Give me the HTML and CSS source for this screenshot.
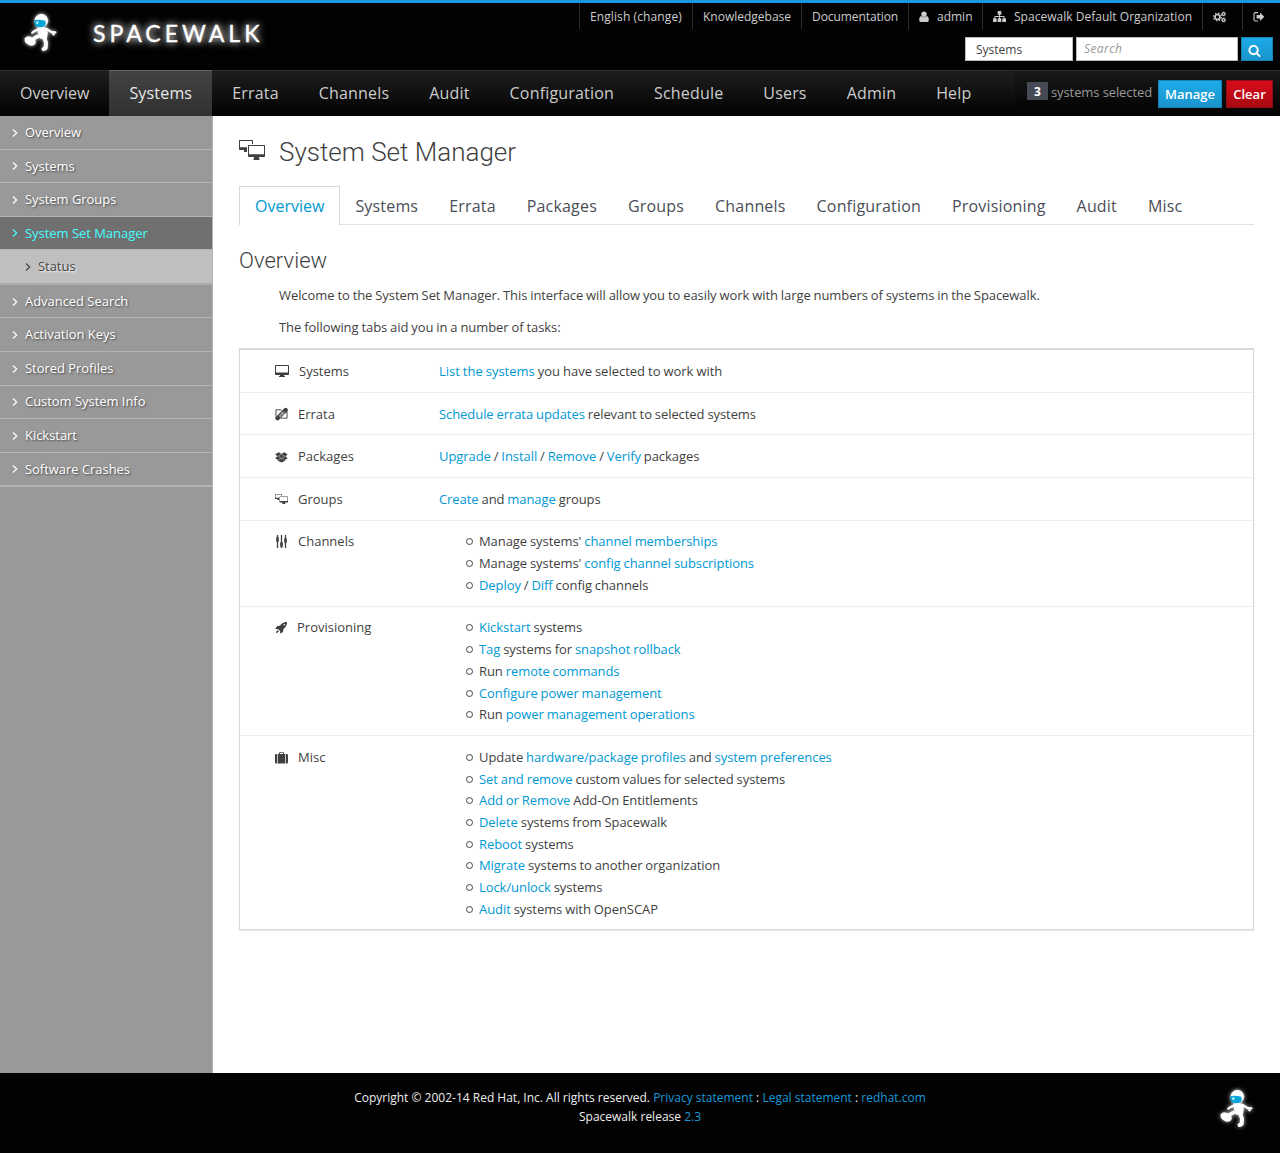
FILE: index.html
```html
<!DOCTYPE html>
<html lang="en">
<head>
<meta charset="utf-8">
<title>Spacewalk - System Set Manager</title>
<link rel="stylesheet" href="styles.css">
</head>
<body>
<svg class="defs" aria-hidden="true">
  <symbol id="astronaut" viewBox="0 0 120 135">
    <g fill="#fff" stroke="#fff" stroke-linecap="round" stroke-linejoin="round">
      <circle cx="64" cy="32" r="20"/>
      <path d="M54 54Q64 52 79 55Q84 70 79 84L62 84Q54 70 54 54Z" stroke-width="4"/>
      <path d="M55 58L42 64L37 68M80 57L94 66L106 67M97 68L101 73" fill="none" stroke-width="7"/>
      <path d="M62 78L52 80L44 84" fill="none" stroke-width="11"/>
      <path d="M15 85Q19 78 28 80Q37 79 45 90Q50 101 41 105Q31 109 24 103Q12 98 15 85Z"/>
      <path d="M72 82L78 98L77 114L71 117" fill="none" stroke-width="12"/>
    </g>
    <path d="M44 30Q60 27 76 32Q79 41 75 48Q62 55 47 49Q41 40 44 30Z" fill="#08a5d8"/>
    <ellipse cx="52" cy="38" rx="4" ry="4" fill="#b4e9fa"/>
  </symbol>
  <symbol id="chevron" viewBox="0 0 6 10"><path d="M1 1.5L4.7 5L1 8.5" fill="none" stroke="currentColor" stroke-width="1.2"/></symbol>
  <symbol id="user" viewBox="0 0 10 12"><circle cx="5" cy="3.2" r="2.7"/><path d="M2.3 5Q5 7.6 7.7 5Q10 5.6 9.8 9.4Q9.6 11 8 11H2Q.4 11 .2 9.4Q0 5.6 2.3 5Z"/></symbol>
  <symbol id="sitemap" viewBox="0 0 1792 1792"><path d="M1792 1248v320q0 40-28 68t-68 28h-320q-40 0-68-28t-28-68v-320q0-40 28-68t68-28h96v-192h-512v192h96q40 0 68 28t28 68v320q0 40-28 68t-68 28h-320q-40 0-68-28t-28-68v-320q0-40 28-68t68-28h96v-192h-512v192h96q40 0 68 28t28 68v320q0 40-28 68t-68 28h-320q-40 0-68-28t-28-68v-320q0-40 28-68t68-28h96v-192q0-52 38-90t90-38h512v-192h-96q-40 0-68-28t-28-68v-320q0-40 28-68t68-28h320q40 0 68 28t28 68v320q0 40-28 68t-68 28h-96v192h512q52 0 90 38t38 90v192h96q40 0 68 28t28 68z"/></symbol>
  <symbol id="cogs" viewBox="0 0 13 12"><g fill="none" stroke="currentColor"><circle cx="4.5" cy="6" r="2.5" stroke-width="1.7"/><circle cx="4.5" cy="6" r="3.9" stroke-width="1.1" stroke-dasharray="1.6 1.46"/><circle cx="10.6" cy="3" r="1.4" stroke-width="1.2"/><circle cx="10.6" cy="3" r="2.1" stroke-width=".7" stroke-dasharray="1 .65"/><circle cx="10.6" cy="9" r="1.4" stroke-width="1.2"/><circle cx="10.6" cy="9" r="2.1" stroke-width=".7" stroke-dasharray="1 .65"/></g></symbol>
  <symbol id="signout" viewBox="0 0 12 12"><path d="M5 1.6H2.5Q1 1.6 1 3V8.6Q1 10 2.5 10H5" fill="none" stroke="currentColor" stroke-width="1.1"/><path d="M3.6 4.1H7V1.5L11.3 5.8L7 10.1V7.5H3.6Z"/></symbol>
  <symbol id="search" viewBox="0 0 1792 1792"><path d="M1216 832q0-185-131.5-316.500t-316.500-131.500-316.500 131.500-131.500 316.500 131.500 316.500 316.500 131.500 316.500-131.500 131.500-316.500zm512 832q0 52-38 90t-90 38q-54 0-90-38l-343-342q-179 124-399 124-143 0-273.500-55.500t-225-150-150-225-55.500-273.500 55.500-273.500 150-225 225-150 273.500-55.500 273.500 55.500 225 150 150 225 55.500 273.500q0 220-124 399l343 343q37 37 37 90z"/></symbol>
  <symbol id="desktop" viewBox="0 0 14 13"><path fill-rule="evenodd" d="M.8 0H13.200Q14 0 14 .8V9.300Q14 10 13.200 10H9V11H10V12H4V11H5V10H.8Q0 10 0 9.300V.8Q0 0 .8 0ZM1 1V7.500H13V1Z"/></symbol>
  <symbol id="desktops" viewBox="0 0 26 20"><path fill-rule="evenodd" d="M.7 0H13.300Q14 0 14 .7V4H13V1H1V7.300H8V12H5V10H.7Q0 10 0 9.300V.7Q0 0 .7 0Z"/><path fill-rule="evenodd" d="M9.700 5H25.300Q26 5 26 5.700V16.300Q26 17 25.300 17H20V18.500H20.500V20H14.500V18.500H15V17H9.700Q9 17 9 16.300V5.700Q9 5 9.700 5ZM10 6V14.200H25V6Z"/></symbol>
  <symbol id="patch" viewBox="0 0 14 14"><path d="M1 10V2.500H7M13 4.500V11.500H6" fill="none" stroke="currentColor"/><path d="M2.700 11.500L11.500 2.700" stroke="currentColor" stroke-width="4.600" stroke-linecap="round"/><path d="M3.900 7.700L6.900 10.700M6.800 4.800L9.800 7.800M4.500 10L10.500 4M5.500 8L8.800 4.700M6.800 9.500L10 6.200" stroke="#fff" stroke-width=".55"/></symbol>
  <symbol id="packages" viewBox="0 0 14 12"><path d="M4 1L6.900 2.800L9.800 1L13.600 3L11.300 5.100L13.600 7.300L11 9V10L6.900 12L3 10V9L.2 7.300L2.500 5.100L.2 3Z"/><path d="M3 5.200L6.900 3.100L10.800 5.200L6.900 7.400ZM3.500 9.200L6.900 7.400L10.300 9.200" fill="none" stroke="#fff" stroke-width=".4"/></symbol>
  <symbol id="sliders" viewBox="0 0 12 14"><path d="M2 0V13M6 0V13M10 0V13" stroke="currentColor" stroke-width="1.300"/><rect x=".7" y="2" width="2.600" height="5" rx="1"/><rect x="4.700" y="7" width="2.600" height="5" rx="1"/><rect x="8.700" y="3" width="2.600" height="5" rx="1"/></symbol>
  <symbol id="rocket" viewBox="0 0 12 12"><path fill-rule="evenodd" d="M12 0Q12.200 4.500 8.300 7.200L8.200 9.800L5.500 11.800L5 9L3.200 7.200L.2 6.700L2.300 3.900L4.900 3.700Q7.800-.1 12 0ZM9.300 2A.8.8 0 1 0 9.300 3.600A.8.8 0 1 0 9.300 2Z"/><path d="M2.200 8L4 9.800L.8 11.200Z"/></symbol>
  <symbol id="suitcase" viewBox="0 0 13 12"><path fill-rule="evenodd" d="M2.700 11.500V2H4V1Q4 .2 5 .2H8Q9 .2 9 1V2H10.300V11.500ZM5 2H8V1.100H5Z"/><path d="M2 2V11.500H1.300Q0 11.500 0 10.300V3.300Q0 2 1.300 2ZM11 2H11.700Q13 2 13 3.300V10.300Q13 11.500 11.700 11.500H11Z"/></symbol>
</svg>

<header class="masthead">
  <a class="brand">
    <svg class="astronaut"><use href="#astronaut"/></svg>
    <span class="wordmark">SPACEWALK</span>
  </a>
  <div class="tools">
    <ul class="toplinks">
      <li class="language">English (change)</li>
      <li class="kb">Knowledgebase</li>
      <li class="docs">Documentation</li>
      <li class="account"><svg class="i-user"><use href="#user"/></svg>admin</li>
      <li class="org"><svg class="i-org"><use href="#sitemap"/></svg>Spacewalk Default Organization</li>
      <li class="prefs"><svg class="i-cogs"><use href="#cogs"/></svg></li>
      <li class="logout"><svg class="i-out"><use href="#signout"/></svg></li>
    </ul>
    <form class="searchbar">
      <span class="scope">Systems</span>
      <span class="query">Search</span>
      <span class="btn go"><svg><use href="#search"/></svg></span>
    </form>
  </div>
</header>

<nav class="mainnav">
  <ul>
    <li class="first">Overview</li><li class="active">Systems</li><li>Errata</li><li>Channels</li><li>Audit</li><li>Configuration</li><li>Schedule</li><li>Users</li><li>Admin</li><li>Help</li>
  </ul>
  <div class="selection">
    <span class="count">3</span><span class="label">systems selected</span>
    <span class="btn manage">Manage</span><span class="btn clear">Clear</span>
  </div>
</nav>

<div class="columns">
  <aside>
    <ul>
      <li><svg><use href="#chevron"/></svg>Overview</li>
      <li><svg><use href="#chevron"/></svg>Systems</li>
      <li><svg><use href="#chevron"/></svg>System Groups</li>
      <li class="active"><svg><use href="#chevron"/></svg>System Set Manager</li>
      <li class="sub"><svg><use href="#chevron"/></svg>Status</li>
      <li><svg><use href="#chevron"/></svg>Advanced Search</li>
      <li><svg><use href="#chevron"/></svg>Activation Keys</li>
      <li><svg><use href="#chevron"/></svg>Stored Profiles</li>
      <li><svg><use href="#chevron"/></svg>Custom System Info</li>
      <li><svg><use href="#chevron"/></svg>Kickstart</li>
      <li class="last"><svg><use href="#chevron"/></svg>Software Crashes</li>
    </ul>
  </aside>
  <main>
    <h1><svg><use href="#desktops"/></svg>System Set Manager</h1>
    <ul class="tabs">
      <li class="active">Overview</li><li>Systems</li><li>Errata</li><li>Packages</li><li>Groups</li><li>Channels</li><li>Configuration</li><li>Provisioning</li><li>Audit</li><li>Misc</li>
    </ul>
    <h2>Overview</h2>
    <p>Welcome to the System Set Manager. This interface will allow you to easily work with large numbers of systems in the Spacewalk.</p>
    <p>The following tabs aid you in a number of tasks:</p>
    <div class="tasks">
      <div class="row"><div class="name"><svg class="w14"><use href="#desktop"/></svg>Systems</div><div class="intro"><a>List the systems</a> you have selected to work with</div></div>
      <div class="row"><div class="name"><svg><use href="#patch"/></svg>Errata</div><div><a>Schedule errata updates</a> relevant to selected systems</div></div>
      <div class="row"><div class="name"><svg class="box"><use href="#packages"/></svg>Packages</div><div><a>Upgrade</a> / <a>Install</a> / <a>Remove</a> / <a>Verify</a> packages</div></div>
      <div class="row"><div class="name"><svg class="group"><use href="#desktops"/></svg>Groups</div><div><a>Create</a> and <a>manage</a> groups</div></div>
      <div class="row"><div class="name"><svg><use href="#sliders"/></svg>Channels</div>
        <ul>
          <li>Manage systems' <a>channel memberships</a></li>
          <li>Manage systems' <a>config channel subscriptions</a></li>
          <li><a>Deploy</a> / <a>Diff</a> config channels</li>
        </ul></div>
      <div class="row"><div class="name"><svg class="w12"><use href="#rocket"/></svg>Provisioning</div>
        <ul>
          <li><a>Kickstart</a> systems</li>
          <li><a>Tag</a> systems for <a>snapshot rollback</a></li>
          <li>Run <a>remote commands</a></li>
          <li><a>Configure power management</a></li>
          <li>Run <a>power management operations</a></li>
        </ul></div>
      <div class="row"><div class="name"><svg class="case"><use href="#suitcase"/></svg>Misc</div>
        <ul>
          <li>Update <a>hardware/package profiles</a> and <a>system preferences</a></li>
          <li><a>Set and remove</a> custom values for selected systems</li>
          <li><a>Add or Remove</a> Add-On Entitlements</li>
          <li><a>Delete</a> systems from Spacewalk</li>
          <li><a>Reboot</a> systems</li>
          <li><a>Migrate</a> systems to another organization</li>
          <li><a>Lock/unlock</a> systems</li>
          <li><a>Audit</a> systems with OpenSCAP</li>
        </ul></div>
    </div>
  </main>
</div>

<footer>
  <div class="legal">
    <div>Copyright © 2002-14 Red Hat, Inc. All rights reserved. <a>Privacy statement</a> : <a>Legal statement</a> : <a>redhat.com</a></div>
    <div>Spacewalk release <a>2.3</a></div>
  </div>
  <svg class="astronaut"><use href="#astronaut"/></svg>
</footer>
</body>
</html>
```
FILE: styles.css
```css
*, ::before { box-sizing: border-box; }
body {
  margin: 0;
  min-height: 1153px;
  display: flex;
  flex-direction: column;
  font: 13px/21.67px "Open Sans", "Noto Sans", sans-serif;
  color: #3f3f3f;
  background: #fff;
}
ul { list-style: none; margin: 0; padding: 0; }
svg { fill: currentColor; flex: none; }
.defs { position: absolute; width: 0; height: 0; }
a { color: #0099d3; text-decoration: none; }

/* Masthead */
.masthead {
  height: 70px;
  display: flex;
  justify-content: space-between;
  background: #020202;
  border-top: 3px solid #1b98e0;
}
.brand { display: flex; align-items: flex-start; padding: 7px 0 0 20px; }
.astronaut { width: 40px; height: 45px; filter: drop-shadow(0 0 2px #ccc); }
.wordmark {
  margin: 5px 0 0 33px;
  font: 400 23px/36px Lato, sans-serif;
  letter-spacing: 4px;
  color: #fff;
  -webkit-text-stroke: .4px #fff;
  text-shadow: 0 0 6px #bbb, 0 0 9px #999, 0 0 12px #777;
}
.tools { display: flex; flex-direction: column; align-items: flex-end; padding-right: 7px; }
.toplinks {
  display: flex;
  font-size: 12px;
  line-height: 27px;
  color: #ccc;
  white-space: nowrap;
}
.toplinks li {
  height: 27px;
  display: flex;
  align-items: center;
  padding-left: 10px;
  border-left: 1px solid #2c2c2c;
}
.language { width: 113px; letter-spacing: .1px; }
.kb { width: 109px; }
.docs { width: 107px; letter-spacing: -.07px; }
.account { width: 74px; }
.org { width: 220px; letter-spacing: .02px; }
.prefs { width: 40px; }
.logout { width: 31px; }
.toplinks .language, .toplinks .kb, .toplinks .docs { height: 26px; }
.i-user { width: 10px; height: 12px; margin-right: 8px; }
.i-org { width: 13px; height: 13px; margin-right: 8px; }
.i-cogs { width: 13px; height: 12px; }
.i-out { width: 12px; height: 12px; }
.searchbar { display: flex; gap: 3px; margin: 7px 0 0; }
.scope, .query {
  height: 24px;
  border: 1px solid #bbb;
  background: #fff;
  font-size: 12px;
  line-height: 24px;
}
.scope { width: 108px; padding-left: 10px; }
.query { width: 162px; padding-left: 7px; font-style: italic; letter-spacing: .4px; line-height: 22px; color: #999; }
.btn {
  color: #fff;
  border: 1px solid #1582b5;
  background: linear-gradient(#1cabe8, #1b94cc);
  text-align: center;
}
.go { width: 32px; height: 24px; }
.go svg { display: block; width: 13px; height: 13px; margin: 6px 0 0 5.5px; }

/* Main navigation */
.mainnav {
  height: 46px;
  display: flex;
  justify-content: space-between;
  border-top: 1px solid #2e2e2e;
  background: linear-gradient(#1e1e1e, #020202);
}
.mainnav ul { display: flex; font-size: 16px; line-height: 45px; color: #ccc; }
.mainnav li { padding: 0 20px; letter-spacing: .18px; }
.mainnav .first { letter-spacing: 0; }
.mainnav .active {
  margin-top: -1px;
  border-top: 1px solid #666;
  background: linear-gradient(#434343, #303030);
  color: #e8e8e8;
}
.selection {
  width: 265px;
  height: 37px;
  display: flex;
  align-items: flex-start;
  padding-left: 12px;
  background: linear-gradient(#181818, #050505);
  color: #999;
}
.count {
  width: 21px;
  height: 18px;
  margin: 11px 3px 0 0;
  background: #464a54;
  color: #fff;
  font-weight: 700;
  font-size: 12px;
  line-height: 19px;
  text-align: center;
}
.label { width: 107px; margin-top: 11px; letter-spacing: -.1px; white-space: nowrap; }
.mainnav .btn { height: 28px; margin-top: 9px; font-weight: 600; line-height: 27px; }
.manage { width: 64px; }
.mainnav .clear { width: 47px; margin-left: 4px; background: linear-gradient(#d90b18, #a60a12); border-color: #890f15; }

/* Sidebar */
.columns { flex: 1; display: flex; }
aside { width: 213px; border-right: 1px solid #b0b0b0; background: #999; }
aside li {
  height: 33.57px;
  display: flex;
  align-items: center;
  padding: 1px 0 0 12px;
  border-bottom: 1px solid #b4b4b4;
  color: #fff;
  letter-spacing: -.04px;
  text-shadow: 1px 1px 2px #444;
}
aside svg { width: 6px; height: 10px; margin-right: 7px; }
aside .active { background: #707070; color: #4ff; text-shadow: none; }
aside .sub {
  height: 34.57px;
  padding-left: 25px;
  border-bottom: 2px solid #aaa;
  background: #bfbfbf;
  color: #444;
  text-shadow: 1px 1px 2px #fff;
}
aside .last { height: 34.57px; border-bottom-width: 2px; }

/* Content */
main { flex: 1; padding: 18px 26px 0; }
h1, h2 { margin: 0; font-family: Roboto, sans-serif; font-weight: 300; }
h1 { height: 36px; display: flex; align-items: center; font-size: 26px; line-height: 36px; }
h1 svg { width: 26px; height: 20px; margin: -4px 14px 0 0; }
.tabs {
  display: flex;
  height: 39px;
  margin-top: 16px;
  border-bottom: 1px solid #e2e2e2;
  font-size: 16px;
  line-height: 41px;
  color: #4a4e57;
}
.tabs li { padding: 0 16px 0 15px; letter-spacing: .18px; }
.tabs .active {
  height: 39px;
  padding: 0 15px;
  border: 1px solid #d8d8d8;
  border-bottom: 0;
  background: #fff;
  color: #0099d3;
  letter-spacing: 0;
  line-height: 39px;
}
h2 { margin: 21px 0 9px; font-size: 22px; line-height: 30px; letter-spacing: .05px; }
p, .row > div:last-child, .row > ul { letter-spacing: -.07px; word-spacing: -.38px; }
.row > .intro:last-child { letter-spacing: -.01px; }
p { margin: 0 0 10.33px 40px; }
p + p { margin-bottom: 9.4px; }
.tasks {
  border: 1px solid #d8d8d8;
  border-top-width: 2px;
  box-shadow: 0 1px 1px #e8e8e8;
}
.row { display: flex; padding: 10.8px 0 9.2px; border-bottom: 1px solid #eee; }
.row:last-child { border-bottom: 0; }
.name { width: 199px; display: flex; align-items: center; height: 21.67px; padding-left: 35px; }
.name svg { width: 13px; height: 14px; margin-right: 10px; }
.name .w14 { width: 14px; height: 13px; }
.name .w12 { width: 12px; height: 12px; }
.name .box { height: 12px; }
.name .case { height: 12px; }
.name .group { height: 10px; margin-top: -2px; }
.row > ul { padding-left: 40px; }
.row li::before {
  content: "";
  display: inline-block;
  width: 7px;
  height: 7px;
  margin: 0 6px 1px -13px;
  border: 1.5px solid #444;
  border-radius: 50%;
}

/* Footer */
footer {
  height: 80px;
  position: relative;
  background: #020202;
  color: #eee;
  font-size: 12px;
  line-height: 19px;
  text-align: center;
}
.legal { padding-top: 15px; }
footer a { color: #1b98d8; }
footer .astronaut { position: absolute; right: 24px; top: 13px; }
```
